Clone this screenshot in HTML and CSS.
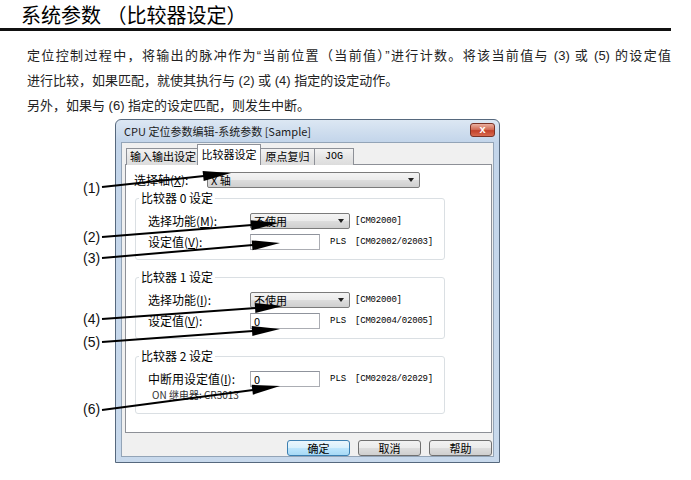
FILE: index.html
```html
<!DOCTYPE html>
<html lang="zh-CN">
<head>
  <meta charset="UTF-8">
  <title>系统参数（比较器设定）</title>
  <link rel="stylesheet" href="styles.css">
</head>
<body>

  <h1 class="page-title">系统参数 （比较器设定）</h1>

  <div class="intro">
    <p class="full">定位控制过程中，将输出的脉冲作为“当前位置（当前值）”进行计数。将该当前值与 (3) 或 (5) 的设定值</p>
    <p>进行比较，如果匹配，就使其执行与 (2) 或 (4) 指定的设定动作。</p>
    <p>另外，如果与 (6) 指定的设定匹配，则发生中断。</p>
  </div>

  <div class="dialog">
    <div class="titlebar">
      <span class="caption">CPU 定位参数编辑-系统参数 [Sample]</span>
      <span class="close">x</span>
    </div>
    <div class="client">
      <div class="tabs">
        <span class="tab tab-io">输入输出设定</span>
        <span class="tab tab-cmp active">比较器设定</span>
        <span class="tab tab-home">原点复归</span>
        <span class="tab tab-jog">JOG</span>
      </div>
      <div class="panel">
        <div class="row axis-row">
          <span class="label axis-label">选择轴(<u>X</u>):</span>
          <div class="combo combo-wide">X 轴</div>
        </div>

        <fieldset class="group">
          <legend>比较器 0 设定</legend>
          <div class="row">
            <span class="label">选择功能(<u>M</u>):</span>
            <div class="combo">不使用</div>
            <span class="code">[CM02000]</span>
          </div>
          <div class="row">
            <span class="label">设定值(<u>V</u>):</span>
            <div class="field"></div>
            <span class="unit">PLS</span>
            <span class="code">[CM02002/02003]</span>
          </div>
        </fieldset>

        <fieldset class="group">
          <legend>比较器 1 设定</legend>
          <div class="row">
            <span class="label">选择功能(<u>I</u>):</span>
            <div class="combo">不使用</div>
            <span class="code">[CM02000]</span>
          </div>
          <div class="row">
            <span class="label">设定值(<u>V</u>):</span>
            <div class="field">0</div>
            <span class="unit">PLS</span>
            <span class="code">[CM02004/02005]</span>
          </div>
        </fieldset>

        <fieldset class="group group-last">
          <legend>比较器 2 设定</legend>
          <div class="row">
            <span class="label">中断用设定值(<u>I</u>):</span>
            <div class="field">0</div>
            <span class="unit">PLS</span>
            <span class="code">[CM02028/02029]</span>
          </div>
          <div class="relay">ON 继电器: CR3013</div>
        </fieldset>
      </div>
      <div class="buttons">
        <span class="btn btn-default">确定</span>
        <span class="btn">取消</span>
        <span class="btn">帮助</span>
      </div>
    </div>
  </div>

  <!-- callout arrows drawn over the screenshot -->
  <svg class="callouts" width="691" height="480" viewBox="0 0 691 480">
    <g class="callout-labels">
      <text x="83" y="193">(1)</text>
      <text x="83" y="242">(2)</text>
      <text x="83" y="263">(3)</text>
      <text x="83" y="324">(4)</text>
      <text x="83" y="347">(5)</text>
      <text x="83" y="414">(6)</text>
    </g>
    <g class="callout-lines">
      <line x1="102" y1="187" x2="204" y2="176"/>
      <line x1="102" y1="237" x2="252" y2="225"/>
      <line x1="102" y1="258" x2="253" y2="245"/>
      <line x1="102" y1="319" x2="256" y2="308"/>
      <line x1="102" y1="342" x2="253" y2="331"/>
      <line x1="102" y1="410" x2="253" y2="390"/>
    </g>
    <g class="callout-heads">
      <polygon points="231,173 203.7,181 202.6,171.1"/>
      <polygon points="279,223 251.5,230.2 250.7,220.2"/>
      <polygon points="280,243 252.5,250.3 251.7,240.4"/>
      <polygon points="283,306 255.4,313 254.7,303"/>
      <polygon points="280,329 252.4,336 251.7,326.1"/>
      <polygon points="280,386 252.9,394.7 251.6,384.8"/>
    </g>
  </svg>

</body>
</html>
```

FILE: styles.css
```css
body {
  margin: 0;
  width: 691px;
  height: 480px;
  overflow: hidden;
  position: relative;
  background: #fff;
  color: #222;
  font-family: "Liberation Sans", "Noto Sans CJK SC", sans-serif;
}

.page-title {
  margin: 0;
  width: 671px;
  height: 31px;
  box-sizing: border-box;
  padding: 4px 0 0 21px;
  line-height: 24px;
  font-size: 20px;
  font-weight: normal;
  color: #000;
  border-bottom: 3px solid #111;
}

.intro {
  margin: 12px 0 0 27px;
  width: 644px;
  font-size: 13px;
  line-height: 25px;
}
.intro p {
  margin: 0;
}
.intro .full {
  text-align: justify;
  text-align-last: justify;
}

/* dialog window */
.dialog {
  margin: 1px 0 0 115px;
  width: 385px;
  height: 344px;
  box-sizing: border-box;
  border: 1px solid #56687d;
  border-radius: 6px 6px 0 0;
  background: linear-gradient(#dce7f3, #c3d5ea 22px, #c8d9ec);
  padding: 0 5px 5px;
  display: flex;
  flex-direction: column;
  font-family: "Noto Sans CJK SC", "Liberation Sans", sans-serif;
  font-size: 12px;
  color: #000;
}
.titlebar {
  height: 22px;
  display: flex;
  justify-content: space-between;
  align-items: center;
}
.caption {
  padding-left: 3px;
  font-size: 11px;
  color: #1a1a1a;
}
.close {
  align-self: flex-start;
  margin: 3px -1px 0 0;
  width: 25px;
  height: 14px;
  box-sizing: border-box;
  border: 1px solid #7a3226;
  border-radius: 3px;
  background: linear-gradient(#eab0a0, #d0664f 50%, #c2412a 55%, #d86a4f);
  color: #fff;
  font-family: "Liberation Sans", sans-serif;
  font-weight: bold;
  font-size: 11px;
  line-height: 11px;
  text-align: center;
}

.client {
  flex: 1;
  background: #f0f0f0;
  border: 1px solid #93a4b7;
  padding: 2px 1px 0 3px;
  display: flex;
  flex-direction: column;
}

.tabs {
  display: flex;
  align-items: flex-end;
  height: 20px;
  margin-bottom: -1px;
  padding-left: 1px;
  position: relative;
  z-index: 1;
}
.tab {
  height: 17px;
  box-sizing: border-box;
  border: 1px solid #8d9097;
  border-bottom: none;
  margin-right: -1px;
  background: linear-gradient(#f3f3f3, #e6e6e6 50%, #dcdcdc);
  font-size: 11px;
  line-height: 15px;
  text-align: center;
}
.tab-io { width: 74px; }
.tab-cmp { width: 64px; }
.tab-home { width: 55px; }
.tab-jog { width: 40px; font-family: "Liberation Mono", monospace; font-size: 10px; }
.tab.active {
  height: 21px;
  margin: 0 -1px 0 -2px;
  background: #fff;
  line-height: 19px;
  position: relative;
}

.panel {
  height: 269px;
  box-sizing: border-box;
  border: 1px solid #8d9097;
  background: #fff;
  padding: 7px 0 0 8px;
}

.row {
  display: flex;
  align-items: center;
  height: 16px;
}
.label {
  width: 102px;
  flex: none;
  line-height: 16px;
}
.axis-label {
  width: 73px;
}
.combo {
  width: 100px;
  height: 16px;
  box-sizing: border-box;
  border: 1px solid #7b7b7b;
  border-radius: 2px;
  background: linear-gradient(#f4f4f4, #ebebeb 50%, #dddddd 50%, #cfcfcf);
  padding-left: 3px;
  line-height: 14px;
  font-size: 11px;
  position: relative;
}
.combo::after {
  content: "";
  position: absolute;
  right: 5px;
  top: 5px;
  border-left: 3px solid transparent;
  border-right: 3px solid transparent;
  border-top: 4px solid #222;
}
.combo-wide {
  width: 213px;
}
.field {
  width: 70px;
  height: 16px;
  box-sizing: border-box;
  border: 1px solid #abadb3;
  border-top-color: #8f939c;
  background: #fff;
  padding-left: 3px;
  line-height: 14px;
  font-size: 11px;
}
.unit {
  margin-left: 10px;
  width: 20px;
  font-family: "Liberation Mono", monospace;
  font-size: 9px;
}
.code {
  margin-left: 5px;
  font-family: "Liberation Mono", monospace;
  font-size: 9px;
  letter-spacing: -0.2px;
}

.group {
  margin: 3px 0 0 1px;
  width: 310px;
  box-sizing: border-box;
  border: 1px solid #dadfe3;
  border-radius: 3px;
  padding: 8px 0 9px 12px;
}
.group + .group {
  margin-top: 10px;
}
.group legend {
  padding: 0 2px;
  margin-left: -9px;
  line-height: 14px;
  font-size: 12px;
}
.group .row + .row {
  margin-top: 5px;
}
.group-last {
  padding-bottom: 12px;
}
.relay {
  margin: 2px 0 0 4px;
  line-height: 12px;
  font-size: 10px;
  color: #333;
}

.buttons {
  display: flex;
  justify-content: flex-end;
  gap: 8px;
  margin-top: 7px;
}
.btn {
  width: 63px;
  height: 16px;
  box-sizing: border-box;
  border: 1px solid #707070;
  border-radius: 3px;
  background: linear-gradient(#f2f2f2, #ebebeb 50%, #dddddd 50%, #cfcfcf);
  text-align: center;
  font-size: 11px;
  line-height: 14px;
}
.btn-default {
  border-color: #3c7fb1;
  background: linear-gradient(#eaf6fd, #d9f0fc 50%, #bee6fd 50%, #a7d9f5);
}

/* annotation overlay */
.callouts {
  position: absolute;
  left: 0;
  top: 0;
  pointer-events: none;
}
.callout-labels text {
  font-family: "Liberation Sans", sans-serif;
  font-size: 14px;
  fill: #111;
}
.callout-lines line {
  stroke: #000;
  stroke-width: 2;
}
.callout-heads polygon {
  fill: #000;
}
```
